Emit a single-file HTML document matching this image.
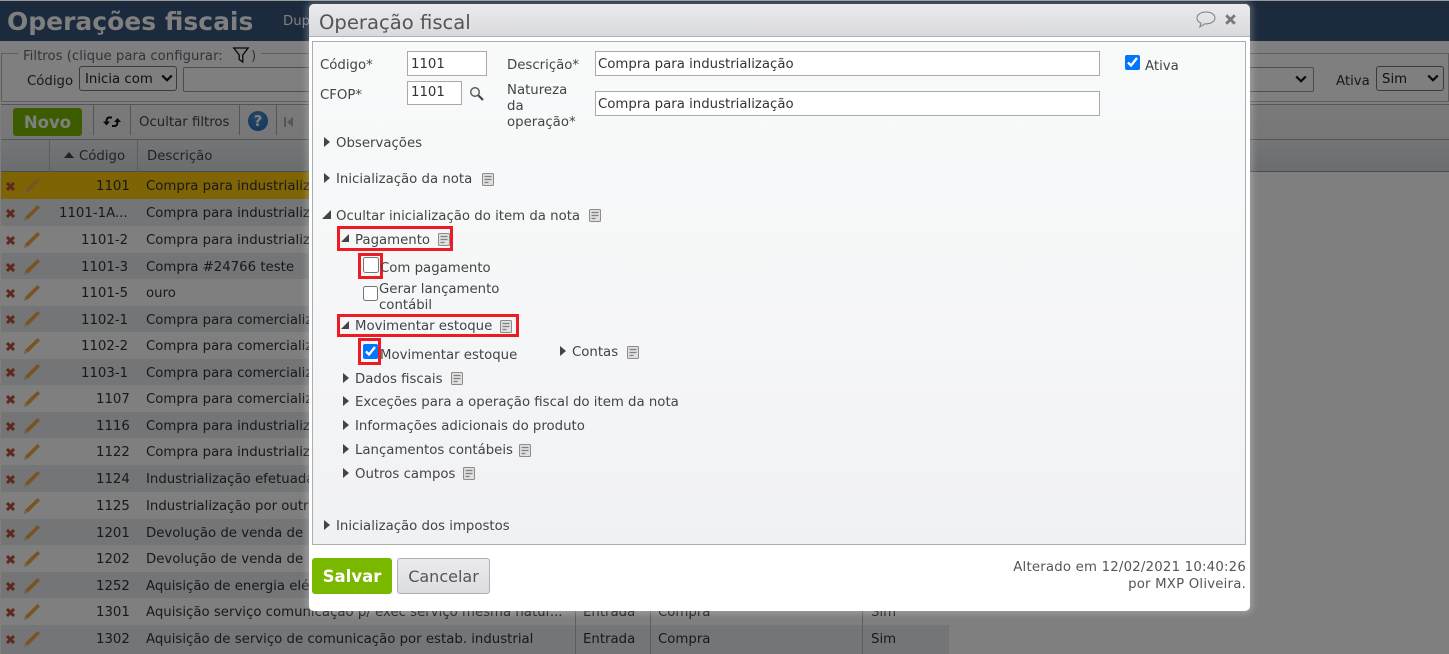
<!DOCTYPE html>
<html lang="pt"><head><meta charset="utf-8"><title>Operações fiscais</title>
<style>
html,body{margin:0;padding:0;width:1449px;height:654px;overflow:hidden;background:#fff}
body{position:relative;font:13.3px "DejaVu Sans","Liberation Sans",sans-serif;color:#444}
.t{position:absolute;white-space:nowrap;line-height:16px;margin-top:2px}
.b{position:absolute;box-sizing:border-box}
.inp{position:absolute;box-sizing:border-box;background:#fff;border:1px solid #a9a9a9;font-size:13.3px;color:#333;line-height:25px;padding-left:2px;white-space:nowrap}
.sel{position:absolute;box-sizing:border-box;border:1px solid #767676;border-radius:3px;background:#fff;color:#222;font-size:13.3px;line-height:26px;padding-left:5px}
.row{position:absolute;left:1px;width:948px;height:27px}
.row .c{position:absolute;white-space:nowrap;line-height:16px;color:#333;top:7px}
.red{position:absolute;box-sizing:border-box;border:3px solid #ed1c24}
svg{position:absolute;overflow:visible}
input[type=checkbox]{position:absolute;margin:0;width:15px;height:15px}
</style></head><body>
<svg width="0" height="0" style="position:absolute"><defs>
<symbol id="doc" viewBox="0 0 12 13"><rect x=".5" y=".5" width="11" height="12" rx="1" fill="#dfdfdf" stroke="#8c8c8c"/><path d="M2.5 3.5h7M2.5 6.5h7M2.5 9.5h4" stroke="#808080" stroke-width="1.2" fill="none"/></symbol>
<symbol id="tri" viewBox="0 0 6 10"><path d="M0 0L6 5L0 10Z" fill="#444"/></symbol>
<symbol id="dn" viewBox="0 0 9 9"><path d="M9 0V9H0Z" fill="#444"/></symbol>
<symbol id="x" viewBox="0 0 9 9"><path d="M1 1L8 8M8 1L1 8" stroke="#c0503c" stroke-width="3"/></symbol>
<symbol id="pen" viewBox="0 0 18 18"><path d="M14.5 1L17 3.5L5 15.5L2 13Z" fill="#f0a845"/><path d="M2 13L5 15.5L.8 17.2Z" fill="#d9c9a8"/></symbol>
<symbol id="chev" viewBox="0 0 12 8"><path d="M1.2 1.5L6 6.2L10.8 1.5" fill="none" stroke="#111" stroke-width="2.2"/></symbol>
</defs></svg>

<!-- background page -->
<div class="b" style="left:0;top:0;width:1449px;height:41px;background:#36547a"></div>
<div class="t" style="left:7px;top:2px;font:bold 25px/36px 'DejaVu Sans',sans-serif;color:#fff">Operações fiscais</div>
<div class="t" style="left:283px;top:12px;color:#fff">Duplicar</div>

<div class="b" style="left:1px;top:53px;width:1448px;height:49px;border:1px solid #bbb"></div>
<div class="t" style="left:18px;top:47px;padding:0 5px;background:#fff;color:#667">Filtros (clique para configurar: <span style="display:inline-block;width:24px"></span>)</div>
<svg style="left:233px;top:47px" width="16" height="16" viewBox="0 0 16 16"><path d="M.8 1H15.2L9.8 8V15L6.2 12.5V8Z" fill="none" stroke="#111" stroke-width="1.3"/></svg>
<div class="t" style="left:27px;top:72px;color:#333">Código</div>
<div class="sel" style="left:79px;top:66px;width:98px;height:25px">Inicia com<svg style="left:81px;top:7px" width="12" height="8"><use href="#chev"/></svg></div>
<div class="b" style="left:183px;top:67px;width:1131px;height:25px;border:1px solid #999;border-radius:2px"></div>
<svg style="left:1295px;top:75px" width="12" height="8"><use href="#chev"/></svg>
<div class="t" style="left:1336px;top:72px;color:#333">Ativa</div>
<div class="sel" style="left:1376px;top:66px;width:68px;height:25px">Sim<svg style="left:50px;top:7px" width="12" height="8"><use href="#chev"/></svg></div>

<div class="b" style="left:1px;top:104px;width:1448px;height:36px;background:linear-gradient(#f4f4f4,#eee);border-top:1px solid #aaa;border-bottom:1px solid #aaa"></div>
<div class="b" style="left:13px;top:108px;width:69px;height:28px;border-radius:3px;background:#7ab800;color:#fff;font:bold 16.5px/29px 'DejaVu Sans',sans-serif;text-align:center">Novo</div>
<div class="b" style="left:93px;top:105px;width:1px;height:30px;background:#aaa"></div>
<div class="b" style="left:130px;top:105px;width:1px;height:30px;background:#aaa"></div>
<div class="b" style="left:239px;top:105px;width:1px;height:30px;background:#aaa"></div>
<div class="b" style="left:276px;top:105px;width:1px;height:30px;background:#aaa"></div>
<svg style="left:103px;top:115px" width="18" height="14" viewBox="0 0 18 14"><path d="M9 2.5H6C4.2 2.5 3.5 4 3.5 7M9 11H12C13.8 11 14.5 9.5 14.5 6" fill="none" stroke="#111" stroke-width="2"/><path d="M0 6.5H7L3.5 10.5ZM11 7H18L14.5 3Z" fill="#111"/></svg>
<div class="t" style="left:139px;top:113px;color:#444">Ocultar filtros</div>
<div class="b" style="left:248px;top:111px;width:20px;height:20px;border-radius:50%;background:radial-gradient(circle at 50% 35%,#4f8fd0,#1f68b8);color:#fff;font:bold 15px/20px 'DejaVu Sans',sans-serif;text-align:center">?</div>
<svg style="left:284px;top:117px" width="9" height="10" viewBox="0 0 9 10"><path d="M0 0H2V10H0ZM9 0V10L3 5Z" fill="#aab"/></svg>

<div class="b" style="left:1px;top:140px;width:1448px;height:32px;background:linear-gradient(#e8ebef,#d5d9de);border-bottom:1px solid #999"></div>
<div class="b" style="left:49px;top:140px;width:1px;height:514px;background:#bbb"></div>
<div class="b" style="left:137px;top:140px;width:1px;height:514px;background:#bbb"></div>
<svg style="left:64px;top:152px" width="10" height="6"><path d="M0 6L5 0L10 6Z" fill="#444"/></svg>
<div class="t" style="left:79px;top:147px;color:#445">Código</div>
<div class="t" style="left:147px;top:147px;color:#445">Descrição</div>

<div class="row" style="top:172px;height:27px;background:#ffc80a"><span class="c" style="left:95px">1101</span><span class="c" style="left:145px">Compra para industrialização</span></div>
<div class="row" style="top:199px;background:#e6ebed"><span class="c" style="left:58px">1101-1A...</span><span class="c" style="left:145px">Compra para industrialização</span></div>
<div class="row" style="top:226px;background:#fff"><span class="c" style="left:80px">1101-2</span><span class="c" style="left:145px">Compra para industrialização</span></div>
<div class="row" style="top:253px;background:#e6ebed"><span class="c" style="left:80px">1101-3</span><span class="c" style="left:145px">Compra #24766 teste</span></div>
<div class="row" style="top:279px;background:#fff"><span class="c" style="left:80px">1101-5</span><span class="c" style="left:145px">ouro</span></div>
<div class="row" style="top:306px;background:#e6ebed"><span class="c" style="left:80px">1102-1</span><span class="c" style="left:145px">Compra para comercialização</span></div>
<div class="row" style="top:332px;background:#fff"><span class="c" style="left:80px">1102-2</span><span class="c" style="left:145px">Compra para comercialização</span></div>
<div class="row" style="top:359px;background:#e6ebed"><span class="c" style="left:80px">1103-1</span><span class="c" style="left:145px">Compra para comercialização</span></div>
<div class="row" style="top:385px;background:#fff"><span class="c" style="left:95px">1107</span><span class="c" style="left:145px">Compra para comercialização</span></div>
<div class="row" style="top:412px;background:#e6ebed"><span class="c" style="left:95px">1116</span><span class="c" style="left:145px">Compra para industrialização</span></div>
<div class="row" style="top:438px;background:#fff"><span class="c" style="left:95px">1122</span><span class="c" style="left:145px">Compra para industrialização</span></div>
<div class="row" style="top:465px;background:#e6ebed"><span class="c" style="left:95px">1124</span><span class="c" style="left:145px">Industrialização efetuada</span></div>
<div class="row" style="top:492px;background:#fff"><span class="c" style="left:95px">1125</span><span class="c" style="left:145px">Industrialização por outra</span></div>
<div class="row" style="top:519px;background:#e6ebed"><span class="c" style="left:95px">1201</span><span class="c" style="left:145px">Devolução de venda de</span></div>
<div class="row" style="top:545px;background:#fff"><span class="c" style="left:95px">1202</span><span class="c" style="left:145px">Devolução de venda de</span></div>
<div class="row" style="top:572px;background:#e6ebed"><span class="c" style="left:95px">1252</span><span class="c" style="left:145px">Aquisição de energia elétrica</span></div>
<div class="row" style="top:598px;background:#fff"><span class="c" style="left:95px">1301</span><span class="c" style="left:145px">Aquisição serviço comunicação p/ exec serviço mesma natur...</span><span class="c" style="left:582px">Entrada</span><span class="c" style="left:657px">Compra</span><span class="c" style="left:870px">Sim</span></div>
<div class="row" style="top:625px;height:29px;background:#e6ebed"><span class="c" style="left:95px">1302</span><span class="c" style="left:145px">Aquisição de serviço de comunicação por estab. industrial</span><span class="c" style="left:582px">Entrada</span><span class="c" style="left:657px">Compra</span><span class="c" style="left:870px">Sim</span></div>
<div class="b" style="left:575px;top:598px;width:1px;height:56px;background:#bbb"></div>
<div class="b" style="left:650px;top:598px;width:1px;height:56px;background:#bbb"></div>
<div class="b" style="left:862px;top:598px;width:1px;height:56px;background:#bbb"></div>

<svg style="left:6px;top:182px" width="9" height="9"><use href="#x"/></svg><svg style="left:23px;top:177px" width="18" height="18"><use href="#pen"/></svg>
<svg style="left:6px;top:209px" width="9" height="9"><use href="#x"/></svg><svg style="left:23px;top:204px" width="18" height="18"><use href="#pen"/></svg>
<svg style="left:6px;top:236px" width="9" height="9"><use href="#x"/></svg><svg style="left:23px;top:231px" width="18" height="18"><use href="#pen"/></svg>
<svg style="left:6px;top:263px" width="9" height="9"><use href="#x"/></svg><svg style="left:23px;top:258px" width="18" height="18"><use href="#pen"/></svg>
<svg style="left:6px;top:289px" width="9" height="9"><use href="#x"/></svg><svg style="left:23px;top:284px" width="18" height="18"><use href="#pen"/></svg>
<svg style="left:6px;top:315px" width="9" height="9"><use href="#x"/></svg><svg style="left:23px;top:310px" width="18" height="18"><use href="#pen"/></svg>
<svg style="left:6px;top:342px" width="9" height="9"><use href="#x"/></svg><svg style="left:23px;top:337px" width="18" height="18"><use href="#pen"/></svg>
<svg style="left:6px;top:368px" width="9" height="9"><use href="#x"/></svg><svg style="left:23px;top:363px" width="18" height="18"><use href="#pen"/></svg>
<svg style="left:6px;top:395px" width="9" height="9"><use href="#x"/></svg><svg style="left:23px;top:390px" width="18" height="18"><use href="#pen"/></svg>
<svg style="left:6px;top:422px" width="9" height="9"><use href="#x"/></svg><svg style="left:23px;top:417px" width="18" height="18"><use href="#pen"/></svg>
<svg style="left:6px;top:448px" width="9" height="9"><use href="#x"/></svg><svg style="left:23px;top:443px" width="18" height="18"><use href="#pen"/></svg>
<svg style="left:6px;top:475px" width="9" height="9"><use href="#x"/></svg><svg style="left:23px;top:470px" width="18" height="18"><use href="#pen"/></svg>
<svg style="left:6px;top:502px" width="9" height="9"><use href="#x"/></svg><svg style="left:23px;top:497px" width="18" height="18"><use href="#pen"/></svg>
<svg style="left:6px;top:529px" width="9" height="9"><use href="#x"/></svg><svg style="left:23px;top:524px" width="18" height="18"><use href="#pen"/></svg>
<svg style="left:6px;top:555px" width="9" height="9"><use href="#x"/></svg><svg style="left:23px;top:550px" width="18" height="18"><use href="#pen"/></svg>
<svg style="left:6px;top:582px" width="9" height="9"><use href="#x"/></svg><svg style="left:23px;top:577px" width="18" height="18"><use href="#pen"/></svg>
<svg style="left:6px;top:608px" width="9" height="9"><use href="#x"/></svg><svg style="left:23px;top:603px" width="18" height="18"><use href="#pen"/></svg>
<svg style="left:6px;top:635px" width="9" height="9"><use href="#x"/></svg><svg style="left:23px;top:630px" width="18" height="18"><use href="#pen"/></svg>

<!-- overlay -->
<div class="b" style="left:0;top:0;width:1449px;height:654px;background:rgba(0,0,0,.5)"></div>
<div class="b" style="left:0;top:0;width:1449px;height:1px;background:#999"></div>

<!-- dialog -->
<div class="b" style="left:309px;top:4px;width:941px;height:607px;background:#fff;border-radius:5px;box-shadow:0 0 6px 3px rgba(255,255,255,.22)"></div>
<div class="b" style="left:309px;top:4px;width:941px;height:33px;background:linear-gradient(#ebebed,#d9dadd);border-radius:5px 5px 0 0;border-bottom:1px solid #aeb2b8"></div>
<div class="t" style="left:319px;top:8px;font-size:19.6px;line-height:26px;color:#555">Operação fiscal</div>
<svg style="left:1196px;top:11px" width="20" height="18" viewBox="0 0 20 18"><path d="M10 1C5 1 1 3.4 1 7C1 9.4 2.8 11.2 5 12.1L3.8 16L8.6 12.9C13.8 13.1 19 11 19 7C19 3.4 15 1 10 1Z" fill="none" stroke="#7b7f85" stroke-width="1"/></svg>
<svg style="left:1225px;top:14px" width="11" height="11" viewBox="0 0 11 11"><path d="M1.2 1.2L9.8 9.8M9.8 1.2L1.2 9.8" stroke="#777" stroke-width="2.8"/></svg>

<div class="b" style="left:312px;top:41px;width:934px;height:504px;border:1px solid #a9aeb5;background:linear-gradient(#f8fafa 0,#f6f7f8 50%,#f0f1f3 100%)"></div>

<div class="t" style="left:320px;top:56px">Código*</div>
<div class="inp" style="left:407px;top:51px;width:80px;height:25px;padding-left:3px">1101</div>
<div class="t" style="left:320px;top:86px">CFOP*</div>
<div class="inp" style="left:407px;top:81px;width:55px;height:24px;padding-left:3px;line-height:22px">1101</div>
<svg style="left:469px;top:86px" width="15" height="15" viewBox="0 0 15 15"><circle cx="6" cy="6" r="4.3" fill="#f0f4f6" stroke="#555" stroke-width="1.4"/><path d="M9.5 9.5L14 14" stroke="#444" stroke-width="2.2"/></svg>
<div class="t" style="left:507px;top:56px">Descrição*</div>
<div class="inp" style="left:595px;top:51px;width:505px;height:25px">Compra para industrialização</div>
<div class="t" style="left:507px;top:81px">Natureza</div>
<div class="t" style="left:507px;top:97px">da</div>
<div class="t" style="left:507px;top:113px">operação*</div>
<div class="inp" style="left:595px;top:91px;width:505px;height:25px">Compra para industrialização</div>
<input type="checkbox" checked style="left:1125px;top:55px">
<div class="t" style="left:1145px;top:57px">Ativa</div>

<svg style="left:324px;top:137px" width="6" height="10"><use href="#tri"/></svg>
<div class="t" style="left:336px;top:134px">Observações</div>
<svg style="left:324px;top:173px" width="6" height="10"><use href="#tri"/></svg>
<div class="t" style="left:336px;top:170px">Inicialização da nota</div>
<svg style="left:482px;top:173px" width="12" height="13"><use href="#doc"/></svg>

<svg style="left:322px;top:210px" width="9" height="9"><use href="#dn"/></svg>
<div class="t" style="left:336px;top:207px">Ocultar inicialização do item da nota</div>
<svg style="left:589px;top:209px" width="12" height="13"><use href="#doc"/></svg>

<div class="red" style="left:337px;top:226px;width:116px;height:25px"></div>
<svg style="left:341px;top:234px" width="8" height="8"><use href="#dn"/></svg>
<div class="t" style="left:355px;top:231px">Pagamento</div>
<svg style="left:438px;top:233px" width="12" height="13"><use href="#doc"/></svg>

<div class="red" style="left:358px;top:253px;width:25px;height:26px"></div>
<input type="checkbox" style="left:363px;top:257px;width:16px;height:16px">
<div class="t" style="left:380px;top:259px">Com pagamento</div>
<input type="checkbox" style="left:363px;top:286px">
<div class="t" style="left:379px;top:280px">Gerar lançamento</div>
<div class="t" style="left:379px;top:296px">contábil</div>

<div class="red" style="left:337px;top:314px;width:182px;height:23px"></div>
<svg style="left:341px;top:321px" width="8" height="8"><use href="#dn"/></svg>
<div class="t" style="left:355px;top:317px">Movimentar estoque</div>
<svg style="left:500px;top:320px" width="12" height="13"><use href="#doc"/></svg>

<div class="red" style="left:358px;top:338px;width:23px;height:27px"></div>
<input type="checkbox" checked style="left:363px;top:344px">
<div class="t" style="left:380px;top:346px">Movimentar estoque</div>
<svg style="left:560px;top:346px" width="6" height="10"><use href="#tri"/></svg>
<div class="t" style="left:572px;top:343px">Contas</div>
<svg style="left:627px;top:346px" width="12" height="13"><use href="#doc"/></svg>

<svg style="left:343px;top:373px" width="6" height="10"><use href="#tri"/></svg>
<div class="t" style="left:355px;top:370px">Dados fiscais</div>
<svg style="left:451px;top:372px" width="12" height="13"><use href="#doc"/></svg>
<svg style="left:343px;top:396px" width="6" height="10"><use href="#tri"/></svg>
<div class="t" style="left:355px;top:393px">Exceções para a operação fiscal do item da nota</div>
<svg style="left:343px;top:420px" width="6" height="10"><use href="#tri"/></svg>
<div class="t" style="left:355px;top:417px">Informações adicionais do produto</div>
<svg style="left:343px;top:444px" width="6" height="10"><use href="#tri"/></svg>
<div class="t" style="left:355px;top:441px">Lançamentos contábeis</div>
<svg style="left:519px;top:444px" width="12" height="13"><use href="#doc"/></svg>
<svg style="left:343px;top:468px" width="6" height="10"><use href="#tri"/></svg>
<div class="t" style="left:355px;top:465px">Outros campos</div>
<svg style="left:463px;top:467px" width="12" height="13"><use href="#doc"/></svg>
<svg style="left:324px;top:520px" width="6" height="10"><use href="#tri"/></svg>
<div class="t" style="left:336px;top:517px">Inicialização dos impostos</div>

<div class="b" style="left:312px;top:558px;width:80px;height:36px;border-radius:3px;background:#7ab800;color:#fff;font:bold 16.5px/38px 'DejaVu Sans',sans-serif;text-align:center">Salvar</div>
<div class="b" style="left:397px;top:558px;width:93px;height:36px;border-radius:3px;background:linear-gradient(#ebebed,#dcdde0);border:1px solid #aeb0b5;color:#555;font-size:16px;line-height:36px;text-align:center">Cancelar</div>
<div class="t" style="right:203px;top:558px;color:#555;text-align:right;letter-spacing:.2px">Alterado em 12/02/2021 10:40:26</div>
<div class="t" style="right:203px;top:575px;color:#555;text-align:right;letter-spacing:.2px">por MXP Oliveira.</div>
</body></html>
